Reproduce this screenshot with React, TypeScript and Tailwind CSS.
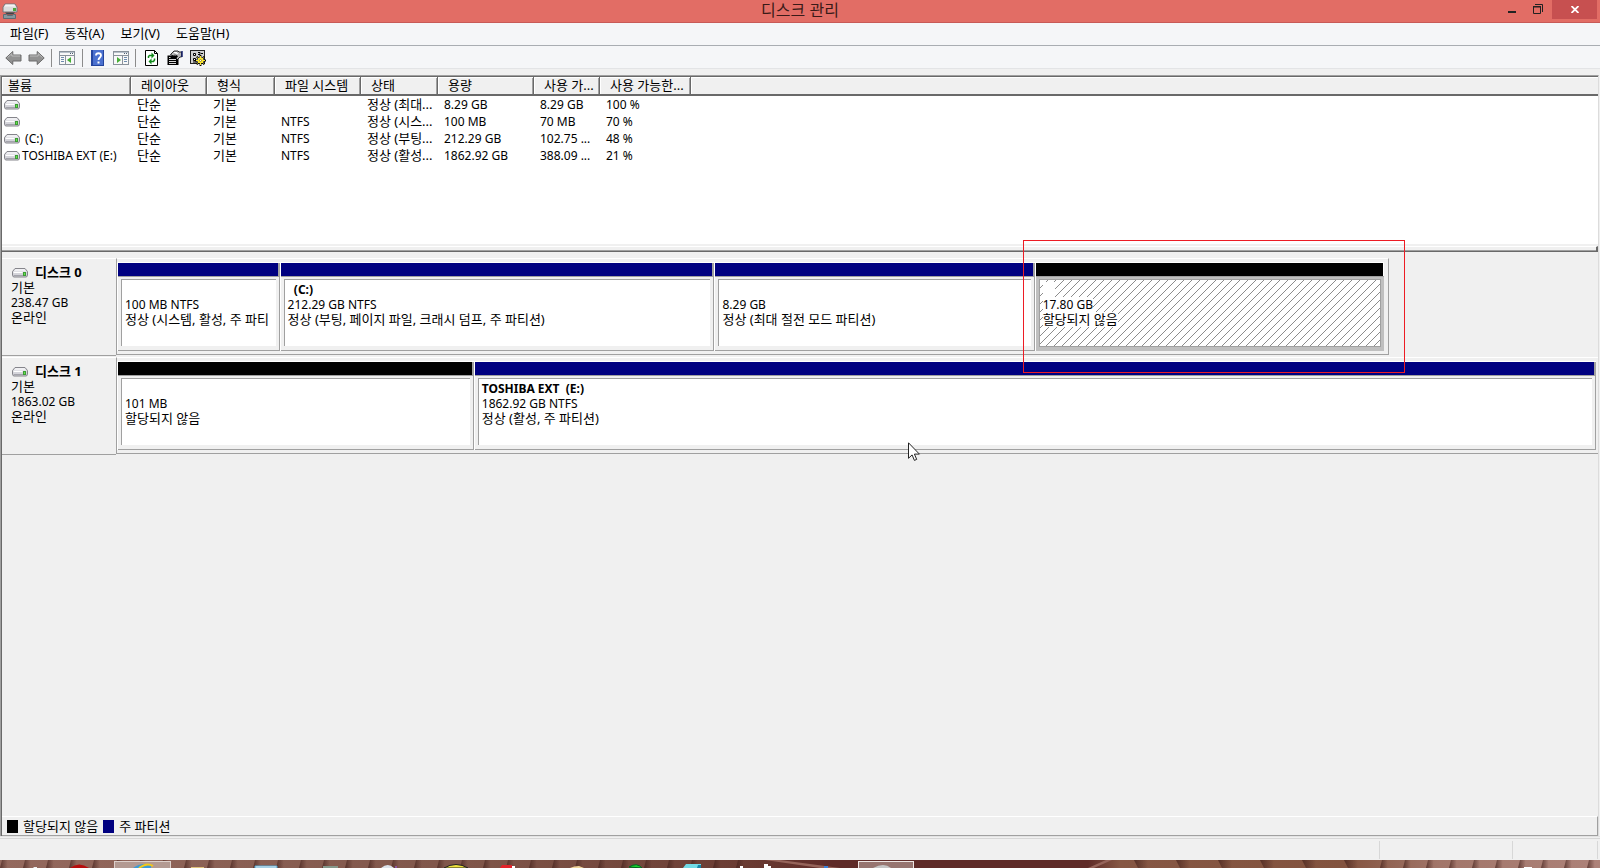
import type { ReactNode } from 'react';

const volumes = [
  { name: '', layout: '단순', type: '기본', fs: '', status: '정상 (최대...', size: '8.29 GB', free: '8.29 GB', pct: '100 %' },
  { name: '', layout: '단순', type: '기본', fs: 'NTFS', status: '정상 (시스...', size: '100 MB', free: '70 MB', pct: '70 %' },
  { name: ' (C:)', layout: '단순', type: '기본', fs: 'NTFS', status: '정상 (부팅...', size: '212.29 GB', free: '102.75 ...', pct: '48 %' },
  { name: 'TOSHIBA EXT (E:)', layout: '단순', type: '기본', fs: 'NTFS', status: '정상 (활성...', size: '1862.92 GB', free: '388.09 ...', pct: '21 %' },
];

const columns = [
  { label: '볼륨', width: 'w-[129px]', pad: 'pl-1.5' },
  { label: '레이아웃', width: 'w-[76px]', pad: 'pl-2.5' },
  { label: '형식', width: 'w-[68px]', pad: 'pl-2.5' },
  { label: '파일 시스템', width: 'w-[86px]', pad: 'pl-2.5' },
  { label: '상태', width: 'w-[77px]', pad: 'pl-2.5' },
  { label: '용량', width: 'w-[96px]', pad: 'pl-2.5' },
  { label: '사용 가...', width: 'w-[66px]', pad: 'pl-2.5' },
  { label: '사용 가능한...', width: 'w-[91px]', pad: 'pl-2.5' },
];

type Part = {
  title?: string;
  size: string;
  status: string;
  weight: number;
  free?: boolean;
  selected?: boolean;
};

type Disk = { name: string; size: string; weight: number; rest: number; parts: Part[] };

const disks: Disk[] = [
  {
    name: '디스크 0',
    size: '238.47 GB',
    weight: 1271,
    rest: 210,
    parts: [
      { size: '100 MB NTFS', status: '정상 (시스템, 활성, 주 파티', weight: 162 },
      { title: '  (C:)', size: '212.29 GB NTFS', status: '정상 (부팅, 페이지 파일, 크래시 덤프, 주 파티션)', weight: 435 },
      { size: '8.29 GB', status: '정상 (최대 절전 모드 파티션)', weight: 320 },
      { size: '17.80 GB', status: '할당되지 않음', weight: 349, free: true, selected: true },
    ],
  },
  {
    name: '디스크 1',
    size: '1863.02 GB',
    weight: 1482,
    rest: 0,
    parts: [
      { size: '101 MB', status: '할당되지 않음', weight: 356, free: true },
      { title: 'TOSHIBA EXT  (E:)', size: '1862.92 GB NTFS', status: '정상 (활성, 주 파티션)', weight: 1122 },
    ],
  },
];

const latin = 'text-[12px]';

function DriveIcon() {
  return (
    <svg width="16" height="10" viewBox="0 0 16 10" className="shrink-0">
      <path d="M3 .5h10l2.500 3v4l-1 1.500h-13l-1-1.500v-4z" fill="#d4d4da" stroke="#85858b" />
      <path d="M3.500 1h9l2 2.500h-13z" fill="#f0f0f3" />
      <path d="M1.500 4.500h9" stroke="#fff" />
      <path d="M1.500 7.500h13" stroke="#a3a3ab" />
      <rect x="11" y="4" width="3" height="4" fill="#3d9c35" />
      <rect x="12" y="5" width="1" height="2" fill="#67e34f" />
    </svg>
  );
}

function AppIcon() {
  return (
    <svg width="16" height="16" viewBox="0 0 16 16">
      <path d="M3 1h10l2 3v5H1V4z" fill="#dcdcdc" stroke="#77767a" />
      <path d="M3.500 1.500h9l1 2h-11z" fill="#f5f5f5" />
      <rect x="11" y="5" width="3" height="3" fill="#4aa73c" />
      <path d="M3 9.500h10l-2 2H5z" fill="#39464c" />
      <path d="M1.500 11.500h3l1 1h5l1-1h2v4h-12z" fill="#87989f" stroke="#5a6c75" />
    </svg>
  );
}

function ArrowIcon({ forward }: { forward?: boolean }) {
  return (
    <svg width="17" height="16" viewBox="0 0 17 16" className={forward ? '-scale-x-100' : ''}>
      <path d="M.8 8l7-6.500V5H16v6H7.800v3.500z" fill="#929292" stroke="#6c6c6c" strokeLinejoin="round" />
      <path d="M2.500 7.500L6.800 3.700V6H15" fill="none" stroke="#bcbcbc" />
    </svg>
  );
}

function PaneIcon({ flip }: { flip?: boolean }) {
  return (
    <svg width="16" height="14" viewBox="0 0 16 14">
      <rect x=".5" y=".5" width="15" height="13" fill="#f8f8f8" stroke="#8a929b" />
      <path d="M1 1.500h14" stroke="#b7c0ca" />
      <path d="M1 4.500h14" stroke="#8a929b" />
      <path d="M11 2.500h1M13 2.500h1" stroke="#4d5e72" />
      {flip ? (
        <>
          <path d="M9.500 5v8" stroke="#8a929b" />
          <path d="M11 6.500h3M11 8.500h3M11 10.500h3" stroke="#6e8cae" />
          <path d="M4 6v6l4-3z" fill="#45ae35" />
        </>
      ) : (
        <>
          <path d="M6.500 5v8" stroke="#8a929b" />
          <path d="M2 6.500h3M2 8.500h3M2 10.500h3" stroke="#6e8cae" />
          <path d="M12 6v6L8 9z" fill="#45ae35" />
        </>
      )}
    </svg>
  );
}

function HelpIcon() {
  return (
    <svg width="13" height="16" viewBox="0 0 13 16">
      <rect width="13" height="16" fill="#4a70cf" />
      <path d="M1 0v16" stroke="#2546a0" strokeWidth="2" />
      <path d="M12.500 0v16M0 15.500h13" stroke="#23449d" />
      <path d="M5 5.500C5 2.500 10 2.500 10 5.500c0 2-2.500 2-2.500 4.500" fill="none" stroke="#fff" strokeWidth="1.800" />
      <rect x="6.500" y="11.500" width="2" height="2" fill="#fff" />
    </svg>
  );
}

function RefreshIcon() {
  return (
    <svg width="13" height="16" viewBox="0 0 13 16">
      <path d="M.5.5h9l3 3v12H.5z" fill="#fff" stroke="#000" />
      <path d="M9.500.5v3h3" fill="none" stroke="#000" />
      <path d="M3.500 8V6.500l1-1H7" fill="none" stroke="#118a1a" strokeWidth="1.500" />
      <path d="M6.500 2.500v6l3-3z" fill="#118a1a" />
      <path d="M9.500 8.500V10l-1 1.500H6" fill="none" stroke="#118a1a" strokeWidth="1.500" />
      <path d="M6.500 8.500v6l-3-3z" fill="#118a1a" />
    </svg>
  );
}

function PropertiesIcon() {
  return (
    <svg width="16" height="16" viewBox="0 0 16 16">
      <path d="M.5 5.500h11v9.500H.5z" fill="#000" />
      <path d="M2 7.500h1.500M2 9.500h7M2 11.500h7M2 13.500h7" stroke="#d6d6d6" />
      <path d="M3.500 4.500L7 1h4l1 1h2.500v5H13l-2.500 2.500-1.500-1 1.500-2.500L8 4.500l-1.500 1.500z" fill="#b8b8b8" stroke="#000" strokeWidth=".8" />
      <path d="M7 2.500h3M8 4l3-.5" stroke="#fff" />
      <path d="M15 1v6" stroke="#16216e" strokeWidth="1.500" />
    </svg>
  );
}

function SettingsIcon() {
  return (
    <svg width="16" height="16" viewBox="0 0 16 16">
      <rect x=".5" y=".5" width="14" height="13" fill="#d2d2d2" stroke="#222" />
      <path d="M3.500 3.500h2v2h-2zM3.500 8.500h2v2h-2z" fill="#fff" stroke="#000" />
      <path d="M8 2.500h2v2H8M11 3.500h2M3 12h4" fill="none" stroke="#000" />
      <path d="M10.500 5v11M5 10.500h11M6.700 6.700l7.600 7.600M14.300 6.700l-7.600 7.600" stroke="#000" strokeWidth="1.800" />
      <path d="M10.500 6v9M6 10.500h9M7.500 7.500l6 6M13.500 7.500l-6 6" stroke="#ffe92e" />
      <circle cx="10.500" cy="10.500" r="2.700" fill="#ffe92e" />
      <circle cx="10.500" cy="10.500" r="1" fill="#fff" stroke="#6b5c00" strokeWidth=".6" />
    </svg>
  );
}

function TitleBar() {
  return (
    <header className="flex h-[23px] shrink-0 border-b border-[#c85a57] bg-[#e26d65]">
      <div className="flex w-[136px] items-center pl-0.5">
        <AppIcon />
      </div>
      <h1 className="flex-1 text-center text-[16px] leading-5 text-[#3a1a18]">디스크 관리</h1>
      <div className="flex w-[136px] justify-end pr-[3px]">
        <button aria-label="최소화" className="flex w-[26px] justify-center pt-[11px]">
          <span className="h-0.5 w-2 bg-[#222]" />
        </button>
        <button aria-label="이전 크기로 복원" className="mr-px flex w-[26px] justify-center pt-1">
          <svg width="10" height="10" viewBox="0 0 10 10" fill="none" stroke="#222">
            <path d="M2 .5h7.500V8" />
            <path d="M.5 3h7v6.500h-7z" />
            <path d="M0 2.500h8" />
          </svg>
        </button>
        <button aria-label="닫기" className="flex h-[19px] w-[45px] items-center justify-center bg-[#c75050]">
          <svg width="8" height="7" viewBox="0 0 8 7" stroke="#fff" strokeWidth="1.800">
            <path d="M.5 0l7 7M7.500 0l-7 7" />
          </svg>
        </button>
      </div>
    </header>
  );
}

function ToolButton({ label, children }: { label: string; children: ReactNode }) {
  return (
    <button aria-label={label} className="flex h-5 w-[23px] items-center justify-center">
      {children}
    </button>
  );
}

function Divider() {
  return <span className="mx-[3px] h-[18px] w-px bg-[#8c8c8c]" />;
}

function VolumeTable() {
  return (
    <div className="h-[167px] shrink-0 overflow-hidden bg-white">
      <table className="w-full table-fixed border-separate border-spacing-0 text-left">
        <thead>
          <tr className="bg-[#f0f0f0]">
            {columns.map((c) => (
              <th
                key={c.label}
                className={`${c.width} ${c.pad} border-r border-b-2 border-[#696969] p-0 font-normal whitespace-nowrap shadow-[inset_1px_1px_#fff,inset_-1px_0_#a0a0a0]`}
              >
                <div className="h-[17px] leading-[17px]">{c.label}</div>
              </th>
            ))}
            <th className="border-b-2 border-[#696969] p-0 shadow-[inset_1px_1px_#fff]" />
          </tr>
        </thead>
        <tbody className="leading-[17px] whitespace-pre">
          {volumes.map((v) => (
            <tr key={v.status} className="h-[17px]">
              <td className="p-0">
                <div className={`flex items-center gap-0.5 pl-0.5 ${latin}`}>
                  <DriveIcon />
                  {v.name}
                </div>
              </td>
              <td className="p-0 pl-1.5">{v.layout}</td>
              <td className="p-0 pl-1.5">{v.type}</td>
              <td className={`p-0 pl-1.5 ${latin}`}>{v.fs}</td>
              <td className="p-0 pl-1.5">{v.status}</td>
              <td className={`p-0 pl-1.5 ${latin}`}>{v.size}</td>
              <td className={`p-0 pl-1.5 ${latin}`}>{v.free}</td>
              <td className={`p-0 pl-1.5 ${latin}`}>{v.pct}</td>
              <td />
            </tr>
          ))}
        </tbody>
      </table>
    </div>
  );
}

function Partition({ part }: { part: Part }) {
  const frame = part.selected ? 'bg-[#bfbfbf]' : 'bg-[#f0f0f0]';
  const body = part.selected
    ? 'border bg-[repeating-linear-gradient(135deg,#fff_0,#fff_5px,#8c8c8c_5px,#8c8c8c_5.657px)]'
    : 'border-t border-l bg-white';
  const line = part.selected ? 'bg-white' : '';

  return (
    <div className="flex min-w-0 basis-0 flex-col border-t border-l border-white" style={{ flexGrow: part.weight }}>
      <div
        className={`h-[13px] border-[#a0a0a0] ${part.selected ? 'border-r border-r-white' : 'border-r-2'} ${part.free ? 'bg-black' : 'bg-[#000080]'}`}
      />
      <div
        className={`flex flex-1 border-t border-[#a0a0a0] pt-0.5 pr-[3px] pb-1 pl-[3px] ${frame} ${part.selected ? '' : 'border-r border-b'}`}
      >
        <div className={`flex min-w-0 flex-1 flex-col items-start overflow-hidden border-[#a0a0a0] pt-0.5 pl-[3px] leading-[15px] whitespace-pre ${body}`}>
          <strong className={`h-[15px] min-w-3 font-bold ${latin} ${line}`}>{part.title}</strong>
          <span className={`h-[15px] ${latin} ${line}`}>{part.size}</span>
          <span className={`h-[15px] ${line}`}>{part.status}</span>
        </div>
      </div>
    </div>
  );
}

function DiskRow({ disk }: { disk: Disk }) {
  return (
    <section className="mb-px flex h-[98px]">
      <div className="w-[114px] shrink-0 border-t border-b border-t-white border-b-[#a0a0a0] pt-1.5 pl-[9px] leading-[15px]">
        <h2 className="flex items-center gap-[7px] pl-px font-bold">
          <DriveIcon />
          {disk.name}
        </h2>
        <p>기본</p>
        <p className={latin}>{disk.size}</p>
        <p>온라인</p>
      </div>
      <div
        className={`flex h-[97px] min-w-0 basis-0 border-t border-b border-l border-t-white border-b-[#a0a0a0] border-l-[#a0a0a0] pt-[3px] pb-[3px] ${disk.rest ? 'border-r border-r-[#a0a0a0] pr-1' : 'pr-0.5'}`}
        style={{ flexGrow: disk.weight }}
      >
        {disk.parts.map((p) => (
          <Partition key={p.size} part={p} />
        ))}
      </div>
      <div className="basis-0" style={{ flexGrow: disk.rest }} />
    </section>
  );
}

function Taskbar() {
  return (
    <footer className="h-2 shrink-0 overflow-hidden bg-[#5f2a26]">
      <svg width="100%" height="8" viewBox="0 0 1600 8" preserveAspectRatio="none">
        <defs>
          <linearGradient id="wood">
            <stop offset="0" stopColor="#94695e" />
            <stop offset=".3" stopColor="#7f5549" />
            <stop offset=".46" stopColor="#6b3d34" />
            <stop offset=".52" stopColor="#5f2b28" />
            <stop offset=".68" stopColor="#5f2b28" />
            <stop offset=".7" stopColor="#865744" />
            <stop offset=".84" stopColor="#83533f" />
            <stop offset=".9" stopColor="#a2766a" />
            <stop offset="1" stopColor="#ad8279" />
          </linearGradient>
          <linearGradient id="groove">
            <stop offset="0" stopColor="#43201b" stopOpacity=".7" />
            <stop offset=".35" stopColor="#43201b" stopOpacity="0" />
          </linearGradient>
          <pattern id="slats" width="23" height="8" patternUnits="userSpaceOnUse">
            <path d="M2 0h20l-2 8H0z" fill="url(#groove)" />
          </pattern>
          <pattern id="wide" width="42" height="8" patternUnits="userSpaceOnUse">
            <path d="M0 0h40v8H4z" fill="url(#groove)" />
          </pattern>
        </defs>
        <rect width="1600" height="8" fill="url(#wood)" />
        <rect width="750" height="8" fill="url(#slats)" />
        <rect x="1110" width="260" height="8" fill="url(#wide)" />
        <rect x="1370" width="230" height="8" fill="url(#slats)" />
        <path d="M780 0l60 8h-20L765 0zM1112 0l-18 8h-6l18-8z" fill="#96645a" />
        <path d="M34 7h3v1h-4z" fill="#eee" />
        <path d="M70 8q9-7 19 0z" fill="#b80d0d" />
        <rect x="114.500" y="1.500" width="56" height="8" fill="#b39a92" stroke="#ddd0cb" />
        <path d="M133 8q8-6 18-3v3z" fill="#3d9bd6" />
        <path d="M139 8q8-6 14-2" fill="none" stroke="#f4c818" strokeWidth="2" />
        <path d="M191 7h13v1h-13z" fill="#e0c27c" />
        <path d="M255 6h22v2h-22z" fill="#fff" stroke="#4da2ce" />
        <path d="M323 6h15v2h-15z" fill="#85988b" />
        <path d="M381 8q7-6 13 0z" fill="#dde3ea" />
        <path d="M396 6v2" stroke="#8b55a0" strokeWidth="2" />
        <path d="M444 8q12-7 24 0z" fill="#f1e33c" stroke="#222" />
        <path d="M502 5h10v3h-12z" fill="#e3222a" />
        <path d="M512 6h3v2h-3z" fill="#fff" />
        <path d="M570 8q4-2 9-2l5 2z" fill="#f0d49a" />
        <path d="M629 7q8-5 13 1z" fill="#19d32d" stroke="#062" />
        <path d="M686 4h15v4h-18z" fill="#72dbe6" />
        <path d="M698 5h3v3h-4z" fill="#1786a8" />
        <path d="M740 6h3v2h-3zM764 4h4v2h3v2h-7z" fill="#fff" />
        <path d="M824 6h4v2h-4z" fill="#3b82dc" />
        <rect x="858.500" y="1.500" width="55" height="8" fill="#977570" stroke="#efe6e4" />
        <path d="M873 8q11-6 18 0z" fill="#c6c6c6" />
        <path d="M1524 7h8v1h-8z" fill="#fff" />
      </svg>
    </footer>
  );
}

export default function App() {
  return (
    <div className="relative flex h-screen flex-col overflow-hidden bg-[#f0f0f0] font-['Noto_Sans','Noto_Sans_CJK_KR',sans-serif] text-[13px] text-black">
      <TitleBar />
      <nav className="flex h-[23px] shrink-0 items-start gap-4 border-b border-[#a9adb2] bg-[#f5f6f8] pl-2.5 leading-5">
        <button>파일(F)</button>
        <button>동작(A)</button>
        <button>보기(V)</button>
        <button>도움말(H)</button>
      </nav>
      <div className="flex h-[23px] shrink-0 items-center border-b border-[#e3e4e6] bg-[#f5f6f8] pt-0.5 pl-0.5">
        <ToolButton label="뒤로"><ArrowIcon /></ToolButton>
        <ToolButton label="앞으로"><ArrowIcon forward /></ToolButton>
        <Divider />
        <ToolButton label="콘솔 트리 표시"><PaneIcon /></ToolButton>
        <span className="w-px" />
        <Divider />
        <ToolButton label="도움말"><HelpIcon /></ToolButton>
        <ToolButton label="작업 창 표시"><PaneIcon flip /></ToolButton>
        <Divider />
        <span className="w-px" />
        <ToolButton label="새로 고침"><RefreshIcon /></ToolButton>
        <ToolButton label="속성"><PropertiesIcon /></ToolButton>
        <ToolButton label="설정"><SettingsIcon /></ToolButton>
      </div>

      <main className="mt-1.5 mr-px flex min-h-0 flex-1 flex-col border-t border-r border-l border-t-[#a0a0a0] border-r-[#dcdcdc] border-l-[#a0a0a0]">
        <div className="flex min-h-0 flex-1 flex-col border-t border-l border-[#696969]">
          <VolumeTable />
          <div className="mt-0.5 h-1.5 shrink-0 border-t border-r-2 border-b border-t-white border-r-[#696969] border-b-[#696969] shadow-[inset_0_-1px_#a0a0a0]" />
          <div className="min-h-0 flex-1 pt-1.5">
            {disks.map((d) => (
              <DiskRow key={d.name} disk={d} />
            ))}
          </div>
          <div className="flex h-5 shrink-0 items-center border-t border-r border-b border-t-white border-r-[#a0a0a0] border-b-[#a0a0a0] pl-[5px]">
            <span className="h-[13px] w-[11px] bg-black" />
            <span className="ml-[5px] leading-[14px]">할당되지 않음</span>
            <span className="ml-[5px] h-[13px] w-[11px] bg-[#000080]" />
            <span className="ml-[5px] leading-[14px]">주 파티션</span>
          </div>
        </div>
      </main>
      <div className="flex h-6 shrink-0 border-t border-[#e3e3e3] pt-px">
        <div className="flex flex-1 justify-end border-t border-[#d7d7d7] pt-0.5 pr-0.5 pb-px">
          <span className="w-[133px] border-l border-[#d7d7d7]" />
          <span className="w-[86px] border-r border-l border-[#d7d7d7]" />
        </div>
      </div>
      <Taskbar />

      {/* highlight box around the unallocated space */}
      <div className="pointer-events-none absolute top-[240px] left-[1023px] h-[133px] w-[382px] border border-[#ed1c24]" />
      <svg width="13" height="20" viewBox="0 0 13 20" className="pointer-events-none absolute top-[442px] left-[908px]">
        <path d="M.5.800v15.500l3.600-3.400 2.300 5.500 2.300-1-2.300-5.300h5z" fill="#fff" stroke="#222" />
      </svg>
    </div>
  );
}
